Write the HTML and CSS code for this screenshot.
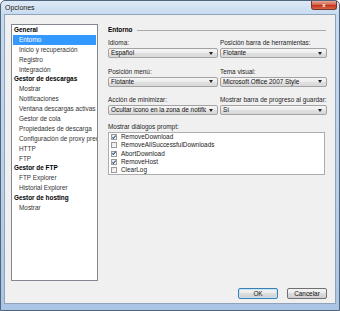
FILE: index.html
```html
<!DOCTYPE html>
<html lang="es">
<head>
    <meta charset="UTF-8">
    <title>Opciones</title>
    <link rel="stylesheet" href="styles.css">
</head>
<body>
<div class="window">
    <div class="titlebar">
        <span class="title">Opciones</span>
        <span class="close">x</span>
    </div>
    <div class="client">
        <div class="main">
            <ul class="tree">
                <li class="cat">General</li>
                <li class="item selected">Entorno</li>
                <li class="item">Inicio y recuperación</li>
                <li class="item">Registro</li>
                <li class="item">Integración</li>
                <li class="cat">Gestor de descargas</li>
                <li class="item">Mostrar</li>
                <li class="item">Notificaciones</li>
                <li class="item">Ventana descargas activas</li>
                <li class="item">Gestor de cola</li>
                <li class="item">Propiedades de descarga</li>
                <li class="item">Configuración de proxy predeterminado</li>
                <li class="item">HTTP</li>
                <li class="item">FTP</li>
                <li class="cat">Gestor de FTP</li>
                <li class="item">FTP Explorer</li>
                <li class="item">Historial Explorer</li>
                <li class="cat">Gestor de hosting</li>
                <li class="item">Mostrar</li>
            </ul>

            <div class="panel">
                <div class="heading"><span>Entorno</span></div>

                <div class="fields">
                    <div class="field">
                        <div class="label">Idioma:</div>
                        <div class="combo"><span class="value">Español</span><span class="arrow"></span></div>
                    </div>
                    <div class="field">
                        <div class="label">Posición barra de herramientas:</div>
                        <div class="combo"><span class="value">Flotante</span><span class="arrow"></span></div>
                    </div>
                    <div class="field">
                        <div class="label">Posición menú:</div>
                        <div class="combo"><span class="value">Flotante</span><span class="arrow"></span></div>
                    </div>
                    <div class="field">
                        <div class="label">Tema visual:</div>
                        <div class="combo"><span class="value">Microsoft Office 2007 Style</span><span class="arrow"></span></div>
                    </div>
                    <div class="field">
                        <div class="label">Acción de minimizar:</div>
                        <div class="combo"><span class="value">Ocultar icono en la zona de notificación</span><span class="arrow"></span></div>
                    </div>
                    <div class="field">
                        <div class="label">Mostrar barra de progreso al guardar:</div>
                        <div class="combo"><span class="value">Sí</span><span class="arrow"></span></div>
                    </div>
                </div>

                <div class="prompts">
                    <div class="label">Mostrar diálogos prompt:</div>
                    <ul class="checklist">
                        <li><span class="check on"></span>RemoveDownload</li>
                        <li><span class="check"></span>RemoveAllSuccessfulDownloads</li>
                        <li><span class="check on"></span>AbortDownload</li>
                        <li><span class="check on"></span>RemoveHost</li>
                        <li><span class="check"></span>ClearLog</li>
                    </ul>
                </div>
            </div>
        </div>

        <div class="footer">
            <button class="btn default">OK</button>
            <button class="btn">Cancelar</button>
        </div>
    </div>
</div>
</body>
</html>
```

FILE: styles.css
```css
html, body {
    margin: 0;
    padding: 0;
    background: #ffffff;
}

body {
    font-family: "Liberation Sans", "DejaVu Sans", sans-serif;
    font-size: 6.4px;
    color: #1e1e1e;
}

ul {
    list-style: none;
    margin: 0;
    padding: 0;
}

.window {
    width: 340px;
    height: 311px;
    box-sizing: border-box;
    border: 1px solid #50647c;
    border-radius: 5px 5px 0 0;
    background: linear-gradient(to bottom, #dde9f6 0, #c6daf0 14px, #b9d0ea 60%, #aac5e5 100%);
    display: flex;
    flex-direction: column;
}

/* title bar */
.titlebar {
    height: 13px;
    display: flex;
    justify-content: space-between;
    padding: 0 2px 0 4px;
}

.title {
    font-size: 7px;
    line-height: 13px;
    color: #101010;
    text-shadow: 0 0 3px #ffffff;
}

.close {
    width: 26px;
    height: 9px;
    box-sizing: border-box;
    border: 1px solid #7a3328;
    border-top: none;
    border-radius: 0 0 3px 3px;
    background: linear-gradient(to bottom, #e9a898 0, #d4644c 45%, #c2341c 55%, #d6684c 100%);
    color: #ffffff;
    font-weight: bold;
    font-size: 6px;
    line-height: 8px;
    text-align: center;
}

/* client area */
.client {
    margin: 0 3px 6px 3px;
    flex: 1;
    border: 1px solid #8fa3bb;
    background: #f0f0f0;
    padding: 9px 8px 4px 6px;
    display: flex;
    flex-direction: column;
}

.main {
    height: 257px;
    display: flex;
    gap: 10px;
}

/* tree */
.tree {
    width: 89px;
    box-sizing: border-box;
    border: 1px solid #828790;
    background: #ffffff;
    overflow: hidden;
}

.tree li {
    line-height: 9.9px;
    height: 9.9px;
    white-space: nowrap;
    overflow: hidden;
}

.tree .cat {
    padding-left: 2px;
    font-weight: bold;
    color: #000000;
}

.tree .item {
    padding-left: 7px;
    color: #333333;
}

.tree .selected {
    margin: 0 1px 0 1px;
    padding-left: 6px;
    background: #3399ff;
    color: #ffffff;
}

/* right panel */
.panel {
    width: 219px;
    display: flex;
    flex-direction: column;
}

.heading {
    margin-top: 2px;
    height: 8px;
    display: flex;
    align-items: center;
    gap: 4px;
    padding-right: 1px;
}

.heading span {
    font-weight: bold;
    line-height: 8px;
    color: #000000;
}

.heading::after {
    content: "";
    flex: 1;
    border-top: 1px solid #a9a9a9;
}

.fields {
    margin-top: 5px;
    display: grid;
    grid-template-columns: 110px 107px;
    column-gap: 2px;
    row-gap: 9.5px;
}

.label {
    line-height: 8px;
    height: 8px;
    margin-bottom: 1px;
    white-space: nowrap;
}

.combo {
    height: 10px;
    box-sizing: border-box;
    border: 1px solid #a3a3a3;
    border-radius: 2px;
    background: linear-gradient(to bottom, #f6f6f6 0, #ececec 50%, #e0e0e0 50%, #d8d8d8 100%);
    display: flex;
    align-items: center;
    padding: 0 4px 0 2px;
}

.combo .value {
    flex: 1;
    line-height: 8px;
    white-space: nowrap;
    overflow: hidden;
    color: #111111;
}

.combo .arrow {
    width: 0;
    height: 0;
    margin-left: 3px;
    border-left: 2.5px solid transparent;
    border-right: 2.5px solid transparent;
    border-top: 3px solid #222222;
}

.prompts {
    margin-top: 8px;
    width: 217px;
}

.checklist {
    height: 43px;
    box-sizing: border-box;
    border: 1px solid #adadad;
    background: #ffffff;
    padding-top: 0;
}

.checklist li {
    height: 8.3px;
    line-height: 8.3px;
    display: flex;
    align-items: center;
    gap: 4px;
    padding-left: 2px;
    color: #222222;
}

.check {
    width: 6px;
    height: 6px;
    box-sizing: border-box;
    border: 1px solid #9a9a9a;
    background: linear-gradient(135deg, #e4e4e4, #ffffff);
    position: relative;
}

.check.on::after {
    content: "";
    position: absolute;
    left: 1.2px;
    top: -0.5px;
    width: 1.4px;
    height: 3px;
    border-right: 1px solid #2b4f7e;
    border-bottom: 1px solid #2b4f7e;
    transform: rotate(40deg);
}

/* buttons */
.footer {
    margin-top: 7px;
    display: flex;
    justify-content: flex-end;
    gap: 9px;
}

.btn {
    width: 40px;
    height: 11px;
    box-sizing: border-box;
    padding: 0;
    border: 1px solid #707070;
    border-radius: 2px;
    background: linear-gradient(to bottom, #f2f2f2 0, #ebebeb 50%, #dddddd 50%, #cfcfcf 100%);
    font-family: "Liberation Sans", "DejaVu Sans", sans-serif;
    font-size: 6.4px;
    line-height: 9px;
    color: #111111;
}

.btn.default {
    border-color: #3c7fb1;
    box-shadow: inset 0 0 0 1px #c5e3f6;
}
```
